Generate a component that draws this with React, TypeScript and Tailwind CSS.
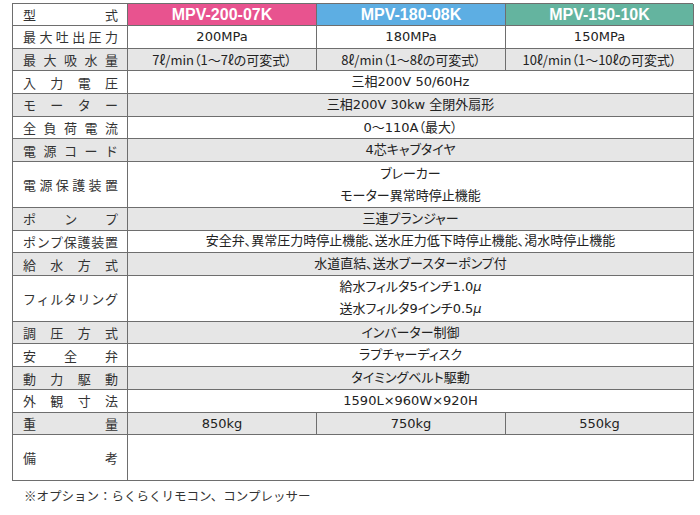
import React from "react";

const S = "h-[22.7px]";
const D = "h-[45.8px]";

type RowProps = {
  label: string;
  values: React.ReactNode[];
  gray?: boolean;
  tall?: boolean;
};

function Row({ label, values, gray, tall }: RowProps) {
  const bg = gray ? "bg-[#e6e6e6]" : "bg-white";
  const h = tall ? D : S;
  return (
    <>
      <div
        className={`${h} ${bg} border-r border-b border-[#6e6e6e] flex items-center pl-[10px] pr-[9px] text-[13px] text-[#333] font-['Noto_Sans_CJK_JP',sans-serif]`}
      >
        <span className="block w-full whitespace-nowrap text-justify [text-align-last:justify] leading-none">{label}</span>
      </div>
      {values.length === 1 ? (
        <div
          className={`${h} ${bg} col-span-3 border-r border-b border-[#6e6e6e] flex flex-col items-center justify-center text-[13px] text-[#222] leading-[22px] [font-feature-settings:'palt']`}
        >
          {values[0]}
        </div>
      ) : (
        values.map((v, i) => (
          <div
            key={i}
            className={`${h} ${bg} border-r border-b border-[#6e6e6e] flex items-center justify-center text-[13px] text-[#222] [font-feature-settings:'palt']`}
          >
            {v}
          </div>
        ))
      )}
    </>
  );
}

const cjk = "font-['Noto_Sans_CJK_JP',sans-serif] text-[13px]";

export default function App() {
  return (
    <div className="w-[700px] h-[515px] bg-white overflow-hidden pt-[3px] pl-[12px] font-['DejaVu_Sans','Noto_Sans_CJK_JP',sans-serif]">
      <div className="grid grid-cols-[115px_189px_189px_188px] w-[681px] border-l border-t border-[#6e6e6e]">
        <div className="h-[22px] bg-white border-r border-b border-[#6e6e6e] flex items-center pl-[10px] pr-[9px] text-[13px] text-[#333] font-['Noto_Sans_CJK_JP',sans-serif]">
          <span className="block w-full whitespace-nowrap text-justify [text-align-last:justify] leading-none">型式</span>
        </div>
        <div className="h-[22px] bg-[#e8538f] border-r border-b border-[#6e6e6e] flex items-center justify-center text-white font-bold text-[16px] font-['Liberation_Sans',sans-serif]">
          MPV-200-07K
        </div>
        <div className="h-[22px] bg-[#5daee3] border-r border-b border-[#6e6e6e] flex items-center justify-center text-white font-bold text-[16px] font-['Liberation_Sans',sans-serif]">
          MPV-180-08K
        </div>
        <div className="h-[22px] bg-[#64b49f] border-r border-b border-[#6e6e6e] flex items-center justify-center text-white font-bold text-[16px] font-['Liberation_Sans',sans-serif]">
          MPV-150-10K
        </div>

        <Row label="最大吐出圧力" values={["200MPa", "180MPa", "150MPa"]} />
        <Row
          label="最大吸水量"
          gray
          values={[
            <span className={cjk}>7ℓ/min（1〜7ℓの可変式）</span>,
            <span className={cjk}>8ℓ/min（1〜8ℓの可変式）</span>,
            <span className={cjk}>10ℓ/min（1〜10ℓの可変式）</span>,
          ]}
        />
        <Row label="入力電圧" values={["三相200V 50/60Hz"]} />
        <Row label="モーター" gray values={["三相200V 30kw 全閉外扇形"]} />
        <Row label="全負荷電流" values={["0〜110A（最大）"]} />
        <Row label="電源コード" gray values={["4芯キャブタイヤ"]} />
        <Row
          label="電源保護装置"
          tall
          values={[
            <>
              <span>ブレーカー</span>
              <span>モーター異常時停止機能</span>
            </>,
          ]}
        />
        <Row label="ポンプ" gray values={["三連プランジャー"]} />
        <Row label="ポンプ保護装置" values={["安全弁、異常圧力時停止機能、送水圧力低下時停止機能、渇水時停止機能"]} />
        <Row label="給水方式" gray values={["水道直結、送水ブースターポンプ付"]} />
        <Row
          label="フィルタリング"
          tall
          values={[
            <>
              <span>給水フィルタ5インチ1.0<i>μ</i></span>
              <span>送水フィルタ9インチ0.5<i>μ</i></span>
            </>,
          ]}
        />
        <Row label="調圧方式" gray values={["インバーター制御"]} />
        <Row label="安全弁" values={["ラプチャーディスク"]} />
        <Row label="動力駆動" gray values={["タイミングベルト駆動"]} />
        <Row label="外観寸法" values={["1590L×960W×920H"]} />
        <Row label="重量" gray values={["850kg", "750kg", "550kg"]} />
        <Row label="備考" tall values={[""]} />
      </div>
      <div className="mt-[7px] pl-[12px] text-[12.5px] text-[#333] leading-[16px] font-['Noto_Sans_CJK_JP',sans-serif]">
        ※オプション：らくらくリモコン、コンプレッサー
      </div>
    </div>
  );
}
